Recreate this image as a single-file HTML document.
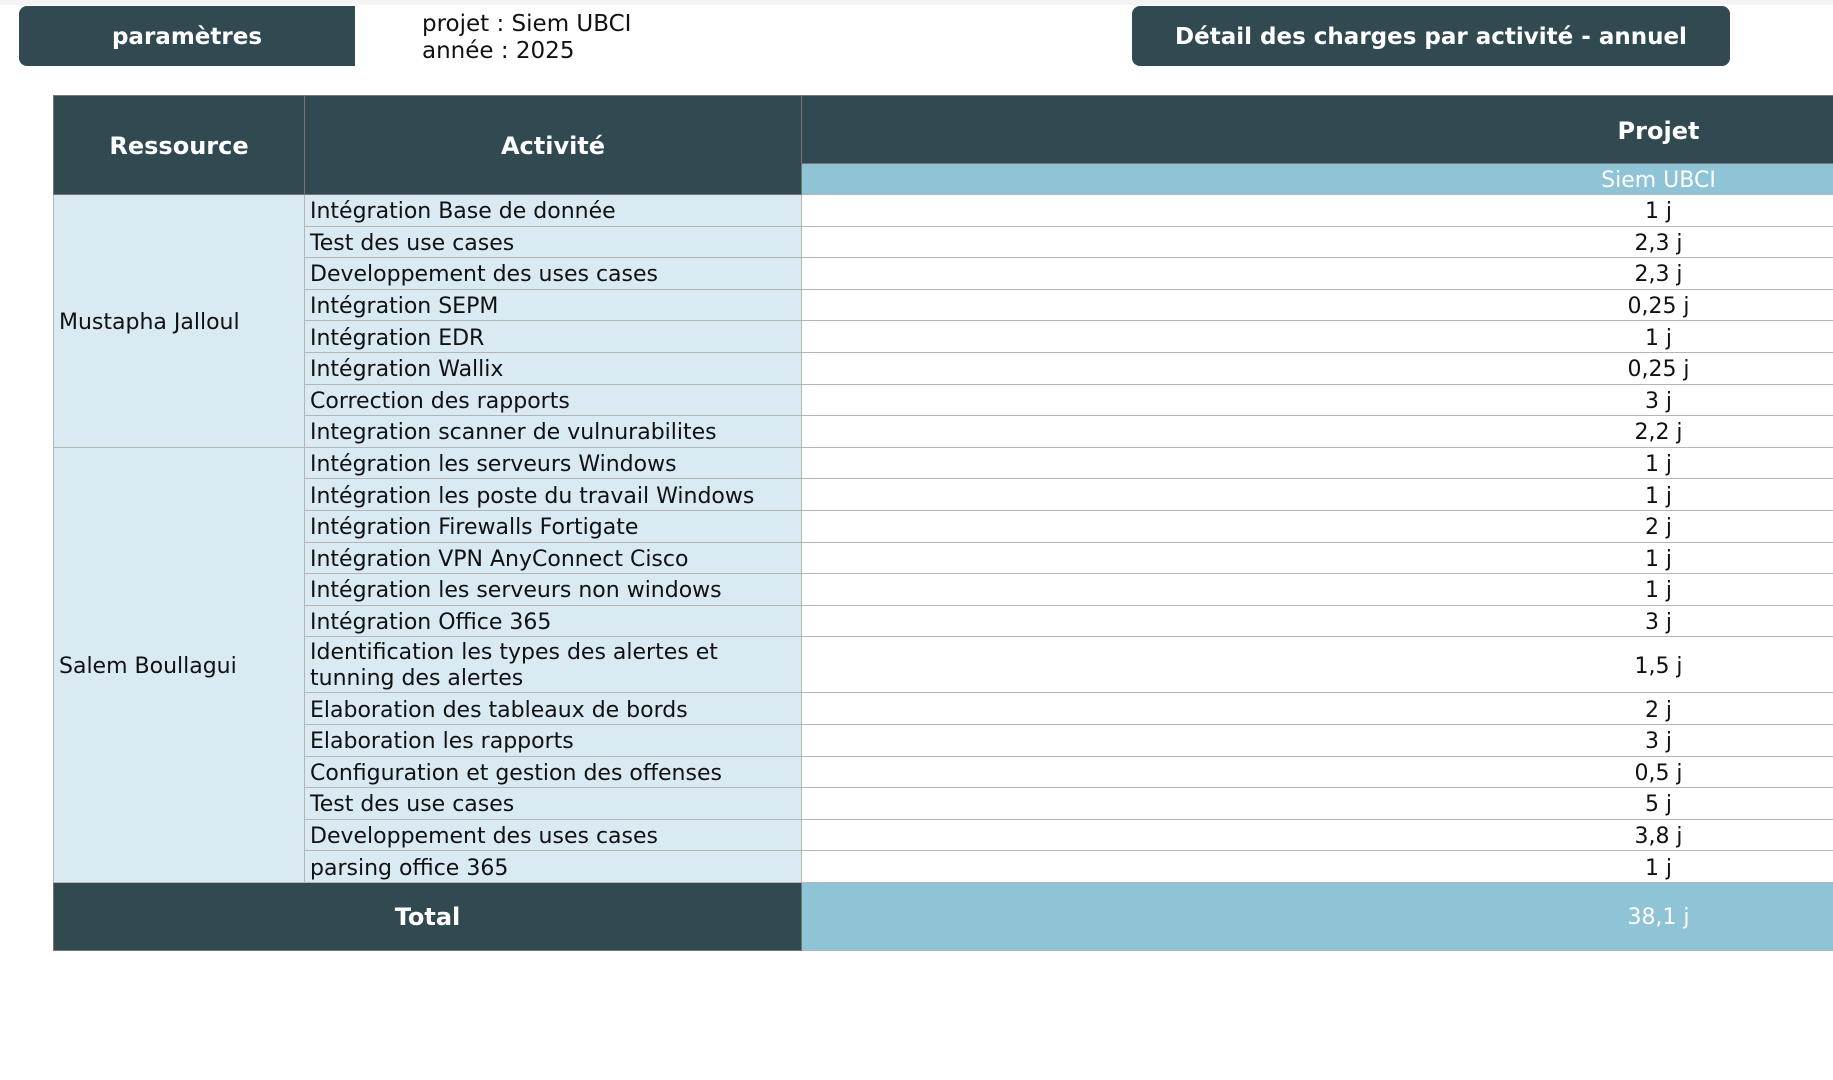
<!DOCTYPE html>
<html><head><meta charset="utf-8"><style>
body{margin:0;width:1833px;height:1080px;background:#fff;font-family:"DejaVu Sans","Liberation Sans",sans-serif;position:relative;overflow:hidden}
.strip{position:absolute;left:0;top:0;width:1833px;height:5px;background:#f4f4f4}
.btn{position:absolute;background:#314a52;color:#fff;font-weight:bold;font-size:23px;display:flex;align-items:center;justify-content:center;padding-top:2px;box-sizing:border-box}
.info{position:absolute;left:422px;top:11px;font-size:23px;line-height:27px;color:#111}
table{position:absolute;left:53px;top:95px;border-collapse:collapse;table-layout:fixed;width:2462px}
td{border:1px solid #b5b5b5;font-size:22px;color:#111;padding:3px 0 0 5px;overflow:hidden;white-space:nowrap}
.h{background:#314a52;color:#fff;font-weight:bold;text-align:center;padding:2px 0 0 0;border-color:#777;font-size:24px}
.sub{background:#8fc3d6;color:#fff;text-align:center;padding:2px 0 0 0}
.r{background:#d9eaf2}
.v{text-align:center;padding:3px 0 0 0;background:#fff}
tr.n td{height:27.6px}
.tot{background:#8fc3d6;color:#fff;text-align:center;padding:2px 0 0 0}
</style></head><body>
<div class="strip"></div>
<div class="btn" style="left:19px;top:6px;width:336px;height:60px;border-radius:8px 0 0 8px">paramètres</div>
<div class="info">projet : Siem UBCI<br>année : 2025</div>
<div class="btn" style="left:1132px;top:6px;width:598px;height:60px;border-radius:8px">Détail des charges par activité - annuel</div>
<table>
<colgroup><col style="width:251px"><col style="width:497px"><col style="width:1714px"></colgroup>
<tr><td class="h" rowspan="2" style="height:65px">Ressource</td><td class="h" rowspan="2">Activité</td><td class="h" style="height:65px">Projet</td></tr>
<tr><td class="sub" style="height:28px">Siem UBCI</td></tr>
<tr class="n"><td class="r" rowspan="8">Mustapha Jalloul</td><td class="r">Intégration Base de donnée</td><td class="v">1 j</td></tr>
<tr class="n"><td class="r">Test des use cases</td><td class="v">2,3 j</td></tr>
<tr class="n"><td class="r">Developpement des uses cases</td><td class="v">2,3 j</td></tr>
<tr class="n"><td class="r">Intégration SEPM</td><td class="v">0,25 j</td></tr>
<tr class="n"><td class="r">Intégration EDR</td><td class="v">1 j</td></tr>
<tr class="n"><td class="r">Intégration Wallix</td><td class="v">0,25 j</td></tr>
<tr class="n"><td class="r">Correction des rapports</td><td class="v">3 j</td></tr>
<tr class="n"><td class="r">Integration scanner de vulnurabilites</td><td class="v">2,2 j</td></tr>
<tr class="n"><td class="r" rowspan="13">Salem Boullagui</td><td class="r">Intégration les serveurs Windows</td><td class="v">1 j</td></tr>
<tr class="n"><td class="r">Intégration les poste du travail Windows</td><td class="v">1 j</td></tr>
<tr class="n"><td class="r">Intégration Firewalls Fortigate</td><td class="v">2 j</td></tr>
<tr class="n"><td class="r">Intégration VPN AnyConnect Cisco</td><td class="v">1 j</td></tr>
<tr class="n"><td class="r">Intégration les serveurs non windows</td><td class="v">1 j</td></tr>
<tr class="n"><td class="r">Intégration Office 365</td><td class="v">3 j</td></tr>
<tr><td class="r" style="height:50px;line-height:26px;white-space:normal">Identification les types des alertes et<br>tunning des alertes</td><td class="v">1,5 j</td></tr>
<tr class="n"><td class="r">Elaboration des tableaux de bords</td><td class="v">2 j</td></tr>
<tr class="n"><td class="r">Elaboration les rapports</td><td class="v">3 j</td></tr>
<tr class="n"><td class="r">Configuration et gestion des offenses</td><td class="v">0,5 j</td></tr>
<tr class="n"><td class="r">Test des use cases</td><td class="v">5 j</td></tr>
<tr class="n"><td class="r">Developpement des uses cases</td><td class="v">3,8 j</td></tr>
<tr class="n"><td class="r">parsing office 365</td><td class="v">1 j</td></tr>
<tr><td class="h" colspan="2" style="height:65px">Total</td><td class="tot">38,1 j</td></tr>
</table>
</body></html>
